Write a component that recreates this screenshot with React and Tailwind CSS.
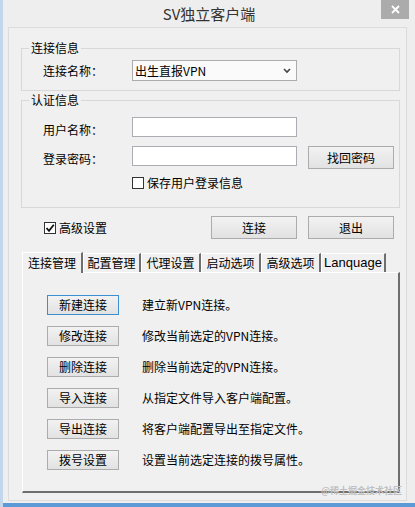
import React from "react";

const font = { fontFamily: '"Noto Sans CJK SC", "Noto Sans", sans-serif' };

function WinButton({ children, className = "", focus = false }) {
  return (
    <div
      className={
        "flex items-center justify-center text-[12px] leading-[16px] text-black border bg-gradient-to-b from-[#f2f2f2] to-[#e2e2e2] " +
        (focus ? "border-[#3c8fd0] " : "border-[#acacac] ") +
        className
      }
    >
      {children}
    </div>
  );
}

function CheckBox({ checked = false }) {
  return (
    <div className="w-[12px] h-[12px] border border-[#333333] bg-white flex items-center justify-center shrink-0">
      {checked && (
        <svg width="10" height="10" viewBox="0 0 10 10">
          <path d="M1.5 5 L4 7.8 L8.8 1.8" stroke="#111" strokeWidth="1.8" fill="none" />
        </svg>
      )}
    </div>
  );
}

function Tab({ children, selected = false, className = "" }) {
  return (
    <div
      className={
        "flex items-center justify-center text-[12px] leading-[16px] text-black bg-[#f0f0f0] border-t border-l border-t-white border-l-white border-r-2 border-r-[#6e6e6e] " +
        (selected ? "h-[21px] relative z-10 -mb-px " : "h-[19px] ") +
        className
      }
    >
      {children}
    </div>
  );
}

const rows = [
  ["新建连接", "建立新VPN连接。"],
  ["修改连接", "修改当前选定的VPN连接。"],
  ["删除连接", "删除当前选定的VPN连接。"],
  ["导入连接", "从指定文件导入客户端配置。"],
  ["导出连接", "将客户端配置导出至指定文件。"],
  ["拨号设置", "设置当前选定连接的拨号属性。"],
];

export default function App() {
  return (
    <div
      className="w-[415px] h-[507px] bg-[#eeeeee] flex flex-col overflow-hidden border-l-[3px] border-l-[#c2d6ee]"
      style={font}
    >
      {/* Title bar */}
      <div className="h-[27px] grid grid-cols-[1fr_auto_1fr] shrink-0">
        <div />
        <div className="text-[15px] leading-[27px] text-[#333333]">SV独立客户端</div>
        <div className="flex justify-end items-start pr-[6px]">
          <div className="w-[28px] h-[19px] bg-[#ababab] flex items-center justify-center">
            <svg width="9" height="9" viewBox="0 0 9 9">
              <path d="M1 1 L8 8 M8 1 L1 8" stroke="#ffffff" strokeWidth="1.8" />
            </svg>
          </div>
        </div>
      </div>

      {/* Client area */}
      <div className="relative ml-[5px] mr-[8px] h-[474px] border border-[#dcdcdc] bg-[#f0f0f0] flex flex-col shrink-0">
        {/* Group 1 */}
        <fieldset className="ml-[12px] mr-[6px] mt-[12px] border border-[#d8d8d8] pt-[4px] pb-[9px]">
          <legend className="ml-[7px] px-[2px] text-[12px] leading-[16px] text-black">连接信息</legend>
          <div className="flex items-center pl-[21px]">
            <div className="w-[89px] text-[12px] leading-[16px] text-black">连接名称：</div>
            <div className="w-[165px] h-[21px] border border-[#acacac] bg-[#fafafa] flex items-center justify-between pl-[2px] pr-[5px]">
              <span className="text-[12px] leading-[16px] text-black">出生直报VPN</span>
              <svg width="8" height="6" viewBox="0 0 8 6">
                <path d="M1 1 L4 4 L7 1" stroke="#444" strokeWidth="1.6" fill="none" />
              </svg>
            </div>
          </div>
        </fieldset>

        {/* Group 2 */}
        <fieldset className="ml-[12px] mr-[6px] mt-[1px] border border-[#d8d8d8] pt-[9px] pb-[16px]">
          <legend className="ml-[7px] px-[2px] text-[12px] leading-[16px] text-black">认证信息</legend>
          <div className="flex items-start pl-[21px]">
            <div className="w-[89px] mt-[5px] text-[12px] leading-[16px] text-black">用户名称：</div>
            <div className="w-[165px] h-[20px] border border-[#abadb3] bg-white" />
          </div>
          <div className="flex items-start pl-[21px] mt-[8px]">
            <div className="w-[89px] mt-[5px] text-[12px] leading-[16px] text-black">登录密码：</div>
            <div className="w-[165px] h-[20px] border border-[#abadb3] bg-white" />
            <WinButton className="ml-[11px] w-[86px] h-[23px]">找回密码</WinButton>
          </div>
          <div className="flex items-center pl-[110px] mt-[6px] gap-[3px]">
            <CheckBox />
            <span className="text-[12px] leading-[16px] text-black">保存用户登录信息</span>
          </div>
        </fieldset>

        {/* Row 3 */}
        <div className="flex items-center mt-[8px] pl-[35px] pr-[12px]">
          <CheckBox checked />
          <span className="ml-[3px] text-[12px] leading-[16px] text-black">高级设置</span>
          <div className="ml-auto flex gap-[11px]">
            <WinButton className="w-[86px] h-[23px]">连接</WinButton>
            <WinButton className="w-[86px] h-[23px]">退出</WinButton>
          </div>
        </div>

        {/* Tabs */}
        <div className="flex items-end ml-[13px] mt-[13px]">
          <Tab selected className="w-[61px]">连接管理</Tab>
          <Tab className="w-[58px]">配置管理</Tab>
          <Tab className="w-[60px]">代理设置</Tab>
          <Tab className="w-[60px]">启动选项</Tab>
          <Tab className="w-[60px]">高级选项</Tab>
          <Tab className="w-[65px]">
            <span style={{ fontFamily: '"Liberation Sans", sans-serif' }} className="text-[13px]">Lanquage</span>
          </Tab>
        </div>
        <div className="ml-[13px] mr-[6px] h-[221px] border-t border-l border-t-white border-l-white border-r-2 border-b-2 border-r-[#6e6e6e] border-b-[#6e6e6e] bg-[#f0f0f0] pt-[22px] pl-[24px] flex flex-col gap-[11px]">
          {rows.map(([b, d], i) => (
            <div key={b} className="flex items-center">
              <WinButton focus={i === 0} className="w-[72px] h-[20px]">{b}</WinButton>
              <span className="ml-[23px] text-[12px] leading-[16px] text-black">{d}</span>
            </div>
          ))}
        </div>

        <div className="absolute right-[4px] bottom-[4px] text-[9px] leading-[10px] font-bold text-[#c0c0c0]">
          @稀土掘金技术社区
        </div>
      </div>

      <div className="h-[2px] shrink-0" />
      <div className="h-[4px] bg-[#5b9ad6] shrink-0" />
    </div>
  );
}
